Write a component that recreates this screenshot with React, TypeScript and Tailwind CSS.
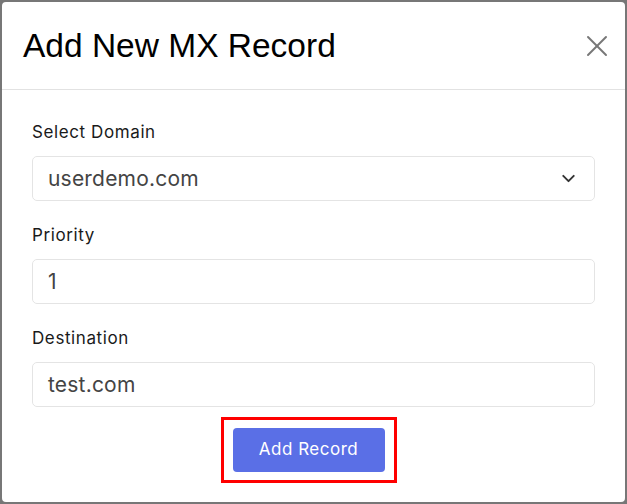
import { ChevronDown, X } from 'lucide-react';

function Field({ label, children }: { label: string; children: React.ReactNode }) {
  return (
    <div className="flex flex-col gap-[12px]">
      <label className="text-[17px] leading-[24px] tracking-[0.6px] text-[#1a1a1a]">{label}</label>
      {children}
    </div>
  );
}

export default function App() {
  return (
    <div className="w-[627px] h-[504px] bg-[#777777]" style={{ fontFamily: 'Inter, "Noto Sans", sans-serif' }}>
      <div className="w-full h-full border-2 border-[#777777] rounded-[6px] bg-white overflow-hidden flex flex-col">
        {/* Header */}
        <div className="h-[88px] shrink-0 flex items-center justify-between pl-[21px] pr-[10px] border-b border-[#e2e2e2]">
          <h1 className="text-[33.5px] leading-none text-black" style={{ fontFamily: '"Liberation Sans", Arial, sans-serif' }}>
            Add New MX Record
          </h1>
          <X size={36} strokeWidth={1.3} className="text-[#777777]" />
        </div>

        {/* Body */}
        <div className="px-[30px] pt-[30px] flex flex-col gap-[22px]">
          <Field label="Select Domain">
            <div className="h-[45px] border border-[#e4e4e4] rounded-[5px] flex items-center justify-between pl-[15px] pr-[15px]">
              <span className="text-[21px] tracking-[0.2px] text-[#444444]">userdemo.com</span>
              <ChevronDown size={21} strokeWidth={2.2} className="text-[#333333]" />
            </div>
          </Field>
          <Field label="Priority">
            <div className="h-[45px] border border-[#e4e4e4] rounded-[5px] flex items-center pl-[15px]">
              <span className="text-[21px] tracking-[0.2px] text-[#444444]">1</span>
            </div>
          </Field>
          <Field label="Destination">
            <div className="h-[45px] border border-[#e4e4e4] rounded-[5px] flex items-center pl-[15px]">
              <span className="text-[21px] tracking-[0.2px] text-[#444444]">test.com</span>
            </div>
          </Field>
        </div>

        <div className="flex justify-center mt-[10px] pr-[10px]">
          <div className="border-[3px] border-[#ff0000] px-[9px] py-[8px]">
            <button className="w-[152px] h-[44px] rounded-[4px] bg-[#5a6fe6] text-white text-[17px] tracking-[0.5px]">
              Add Record
            </button>
          </div>
        </div>
      </div>
    </div>
  );
}
